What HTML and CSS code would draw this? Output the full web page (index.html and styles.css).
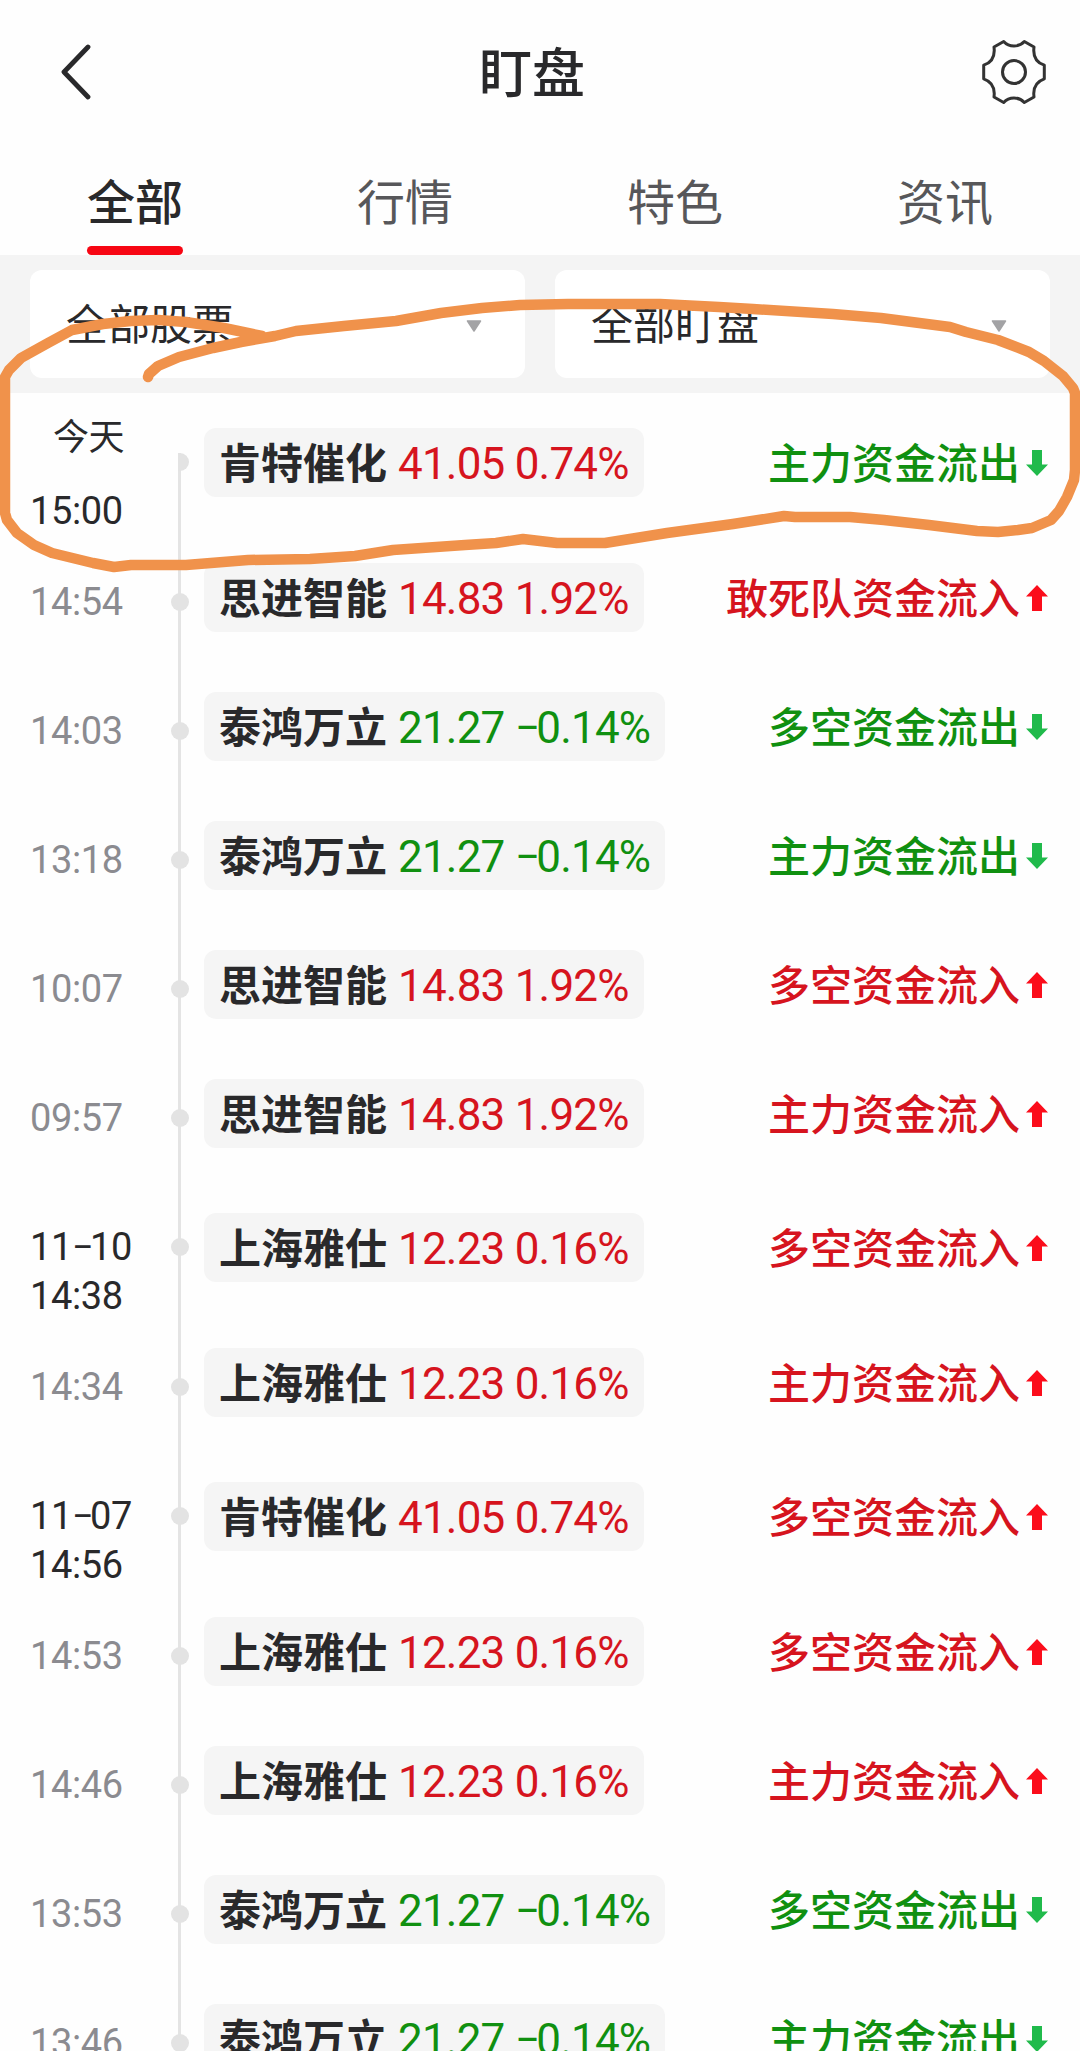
FILE: index.html
```html
<!DOCTYPE html>
<html lang="zh-CN">
<head>
<meta charset="utf-8">
<title>盯盘</title>
<link rel="stylesheet" href="styles.css">
</head>
<body>
<svg class="defs" aria-hidden="true">
  <symbol id="up" viewBox="0 0 22 26"><path d="M11 0 22 11.500H16V26H6V11.500H0Z"/></symbol>
  <symbol id="down" viewBox="0 0 22 26"><path d="M11 26 22 14.500H16V0H6V14.500H0Z"/></symbol>
</svg>
<div class="app">
  <header class="header">
    <svg class="back" viewBox="0 0 30 56"><path d="M27 3 3 28 27 53"/></svg>
    <h1 class="title">盯盘</h1>
    <svg class="gear" viewBox="-33 -33 66 66"><path d="M-10.300 -30.500C-5 -24.500 5 -24.500 10.300 -30.500L20 -25C18.800 -16 22.500 -9.500 30.300 -6.800V6.800C22.500 9.500 18.800 16 20 25L10.300 30.500C5 24.500 -5 24.500 -10.300 30.500L-20 25C-18.800 16 -22.500 9.500 -30.300 6.800V-6.800C-22.500 -9.500 -18.800 -16 -20 -25Z"/><circle r="11.500"/></svg>
  </header>
  <nav class="tabs">
    <a class="tab active">全部</a><a class="tab">行情</a><a class="tab">特色</a><a class="tab">资讯</a>
  </nav>
  <div class="filters">
    <div class="select"><span>全部股票</span><svg class="caret" viewBox="0 0 16 12"><path d="M1.500 1h13L8 11Z"/></svg></div>
    <div class="select"><span>全部盯盘</span><svg class="caret" viewBox="0 0 16 12"><path d="M1.500 1h13L8 11Z"/></svg></div>
  </div>
  <main class="list">
    <div class="item dated today"><div class="time"><span class="day">今天</span><span>15:00</span></div><div class="axis"><i class="dot"></i></div><div class="chip"><b>肯特催化</b><span class="num red">41.05 0.74%</span></div><div class="signal green"><span>主力资金流出</span><svg class="arrow"><use href="#down"/></svg></div></div>
    <div class="item"><div class="time"><span>14:54</span></div><div class="axis"><i class="dot"></i></div><div class="chip"><b>思进智能</b><span class="num red">14.83 1.92%</span></div><div class="signal red"><span>敢死队资金流入</span><svg class="arrow"><use href="#up"/></svg></div></div>
    <div class="item"><div class="time"><span>14:03</span></div><div class="axis"><i class="dot"></i></div><div class="chip"><b>泰鸿万立</b><span class="num green">21.27 <em>−</em>0.14%</span></div><div class="signal green"><span>多空资金流出</span><svg class="arrow"><use href="#down"/></svg></div></div>
    <div class="item"><div class="time"><span>13:18</span></div><div class="axis"><i class="dot"></i></div><div class="chip"><b>泰鸿万立</b><span class="num green">21.27 <em>−</em>0.14%</span></div><div class="signal green"><span>主力资金流出</span><svg class="arrow"><use href="#down"/></svg></div></div>
    <div class="item"><div class="time"><span>10:07</span></div><div class="axis"><i class="dot"></i></div><div class="chip"><b>思进智能</b><span class="num red">14.83 1.92%</span></div><div class="signal red"><span>多空资金流入</span><svg class="arrow"><use href="#up"/></svg></div></div>
    <div class="item"><div class="time"><span>09:57</span></div><div class="axis"><i class="dot"></i></div><div class="chip"><b>思进智能</b><span class="num red">14.83 1.92%</span></div><div class="signal red"><span>主力资金流入</span><svg class="arrow"><use href="#up"/></svg></div></div>
    <div class="item dated"><div class="time"><span>11<em>−</em>10</span><span>14:38</span></div><div class="axis"><i class="dot"></i></div><div class="chip"><b>上海雅仕</b><span class="num red">12.23 0.16%</span></div><div class="signal red"><span>多空资金流入</span><svg class="arrow"><use href="#up"/></svg></div></div>
    <div class="item"><div class="time"><span>14:34</span></div><div class="axis"><i class="dot"></i></div><div class="chip"><b>上海雅仕</b><span class="num red">12.23 0.16%</span></div><div class="signal red"><span>主力资金流入</span><svg class="arrow"><use href="#up"/></svg></div></div>
    <div class="item dated"><div class="time"><span>11<em>−</em>07</span><span>14:56</span></div><div class="axis"><i class="dot"></i></div><div class="chip"><b>肯特催化</b><span class="num red">41.05 0.74%</span></div><div class="signal red"><span>多空资金流入</span><svg class="arrow"><use href="#up"/></svg></div></div>
    <div class="item"><div class="time"><span>14:53</span></div><div class="axis"><i class="dot"></i></div><div class="chip"><b>上海雅仕</b><span class="num red">12.23 0.16%</span></div><div class="signal red"><span>多空资金流入</span><svg class="arrow"><use href="#up"/></svg></div></div>
    <div class="item"><div class="time"><span>14:46</span></div><div class="axis"><i class="dot"></i></div><div class="chip"><b>上海雅仕</b><span class="num red">12.23 0.16%</span></div><div class="signal red"><span>主力资金流入</span><svg class="arrow"><use href="#up"/></svg></div></div>
    <div class="item"><div class="time"><span>13:53</span></div><div class="axis"><i class="dot"></i></div><div class="chip"><b>泰鸿万立</b><span class="num green">21.27 <em>−</em>0.14%</span></div><div class="signal green"><span>多空资金流出</span><svg class="arrow"><use href="#down"/></svg></div></div>
    <div class="item"><div class="time"><span>13:46</span></div><div class="axis"><i class="dot"></i></div><div class="chip"><b>泰鸿万立</b><span class="num green">21.27 <em>−</em>0.14%</span></div><div class="signal green"><span>主力资金流出</span><svg class="arrow"><use href="#down"/></svg></div></div>
  </main>
  <svg class="marker" viewBox="0 0 1080 600"><path d="M148 377 149 374 158 366 179 357 213 348 241 342 275 336 296 331 344 326 396 321 441 313 482 308 520 305 568 304 660 304 719 307 753 309 833 314 881 318 950 327 966 332 998 340 1029 352 1044 361 1063 376 1073 388 1075 393V470L1074 480 1067 497 1059 511 1051 520 1032 528 1018 530 998 532 977 531 929 525 884 520 850 517H795L784 516 733 524 667 533 605 543H557L540 541 523 539 496 543 465 545 393 550 355 556 310 559 248 560 186 565H131L114 567 93 563 52 553 34 545 17 533 7 520 5 513V377L9 370 21 358 48 343 72 330 103 324 131 321 158 320 186 322 224 328 262 336"/></svg>
</div>
</body>
</html>
```
FILE: styles.css
```css
* { box-sizing: border-box; }
body {
  margin: 0;
  background: #fefefe;
  color: #29292b;
  font-family: Roboto, "Noto Sans CJK SC", sans-serif;
}
.defs { display: none; }
.app {
  position: relative;
  width: 1080px;
  height: 2051px;
  overflow: hidden;
}
svg { display: block; flex: none; }
em { font-style: normal; letter-spacing: -3.6px; }

.header {
  display: flex;
  align-items: center;
  justify-content: space-between;
  height: 144px;
  padding: 0 33px 0 61px;
}
.back { width: 30px; height: 56px; }
.back path {
  fill: none;
  stroke: #29292b;
  stroke-width: 4.8;
  stroke-linecap: round;
  stroke-linejoin: round;
}
.title {
  margin: 0;
  padding: 7px 8px 0 0;
  font-size: 53px;
  font-weight: 500;
  line-height: 137px;
}
.gear { width: 66px; height: 66px; }
.gear path, .gear circle {
  fill: none;
  stroke: #333;
  stroke-width: 3;
  stroke-linejoin: round;
}

.tabs {
  display: grid;
  grid-template-columns: repeat(4, 1fr);
  height: 111px;
}
.tab {
  display: flex;
  flex-direction: column;
  align-items: center;
  font-size: 48px;
  line-height: 119px;
  color: #57575a;
}
.active { color: #29292b; font-weight: 500; }
.active::after {
  content: "";
  width: 96px;
  height: 9px;
  margin-top: -17px;
  border-radius: 5px;
  background: #f70613;
}

.filters {
  display: grid;
  grid-template-columns: 1fr 1fr;
  gap: 30px;
  height: 138px;
  padding: 15px 30px;
  background: #f4f4f4;
}
.select {
  display: flex;
  align-items: center;
  justify-content: space-between;
  padding: 0 43px 0 36px;
  border-radius: 12px;
  background: #fff;
  font-size: 42px;
  line-height: 104px;
}
.select span { padding-top: 4px; }
.caret { width: 16px; height: 12px; margin-top: 4px; }
.caret path {
  fill: #a3a3a5;
  stroke: #a3a3a5;
  stroke-width: 1.500;
  stroke-linejoin: round;
}

.item {
  display: grid;
  grid-template-columns: 141px 18px auto 1fr;
  align-items: start;
  height: 129px;
  padding: 0 32px 0 30px;
}
.dated { height: 140px; }
.time {
  display: flex;
  flex-direction: column;
  padding-top: 45px;
  font-size: 38px;
  line-height: 49px;
  letter-spacing: -0.4px;
  color: #8b8b90;
}
.dated .time { color: #29292b; }
.today .time { padding-top: 9px; line-height: 73px; }
.day { padding-left: 23px; font-size: 36px; }
.axis {
  display: flex;
  height: 100%;
  padding-top: 60px;
  background: linear-gradient(#e4e4e4, #e4e4e4) 7px 0 / 3px 100% no-repeat;
}
.today .axis { background-position-y: 60px; clip-path: inset(0 0 0 7px); }
.dot { width: 18px; height: 18px; border-radius: 50%; background: #e3e3e3; }
.chip {
  display: flex;
  align-items: center;
  height: 69px;
  margin: 30px 0 0 15px;
  padding: 4px 15px 0 15px;
  border-radius: 12px;
  background: #f5f5f5;
  font-size: 42px;
  line-height: 65px;
  white-space: nowrap;
}
.num { margin-left: 11px; font-size: 44px; letter-spacing: -0.8px; }
.signal {
  display: flex;
  align-items: center;
  justify-content: flex-end;
  height: 69px;
  margin-top: 30px;
  font-size: 42px;
  font-weight: 500;
  line-height: 65px;
  white-space: nowrap;
}
.signal span { padding-top: 4px; }
.dated .chip, .dated .signal { margin-top: 35px; }
.red { color: #d6141e; }
.green { color: #109010; }
.arrow { width: 22px; height: 26px; margin-left: 6px; fill: #fb0d1b; }
.green .arrow { fill: #20ba4b; }

.marker {
  position: absolute;
  top: 0;
  left: 0;
  width: 1080px;
  height: 600px;
  pointer-events: none;
}
.marker path {
  fill: none;
  stroke: #f0924b;
  stroke-width: 10.500;
  stroke-linecap: round;
  stroke-linejoin: round;
}
```
